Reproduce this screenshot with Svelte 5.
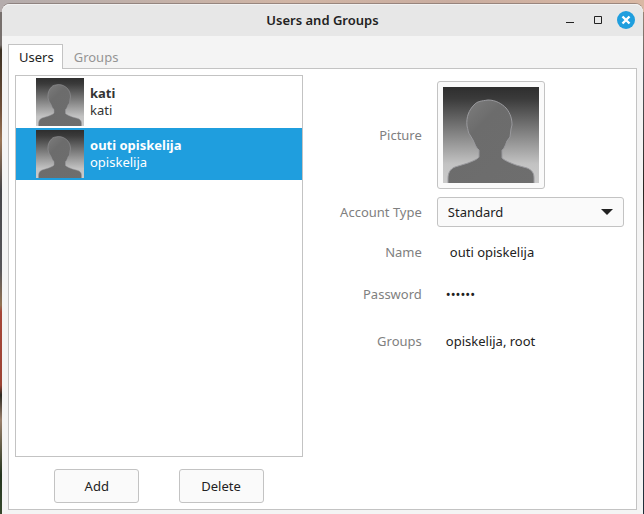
<script>
  let tab = $state('Users');
  let selected = $state(1);
  let accountType = $state('Standard');
  const users = [
    { name: 'kati', login: 'kati', groups: 'kati' },
    { name: 'outi opiskelija', login: 'opiskelija', groups: 'opiskelija, root' }
  ];
  const user = $derived(users[selected]);
</script>

{#snippet avatar(id)}
  <svg class="avatar" viewBox="0 0 96 96" aria-hidden="true">
    <defs>
      <linearGradient id="{id}-sky" x1="0" y1="0" x2="0" y2="1">
        <stop offset="0" stop-color="#2e2e2e" />
        <stop offset=".12" stop-color="#3a3a3a" />
        <stop offset=".5" stop-color="#868686" />
        <stop offset=".8" stop-color="#c2c2c2" />
        <stop offset="1" stop-color="#cbcbcb" />
      </linearGradient>
      <linearGradient id="{id}-head" x1="0" y1="0" x2="1" y2="1">
        <stop offset=".12" stop-color="#7c7c7c" />
        <stop offset=".34" stop-color="#6c6c6c" />
        <stop offset="1" stop-color="#6e6e6e" />
      </linearGradient>
    </defs>
    <rect width="96" height="96" fill="url(#{id}-sky)" />
    <path
      d="M5 97V92C5 86 7 82 12 80L25 76C30 74 35 72 36 70V63C33 61 32 57 30 53L27 48C25 46 25 42 24 39C23 30 26 23 31 18C34 14 39 14 45 13C53 13 59 17 63 21C68 27 69 33 69 38L68 42L67 50L64 54C62 59 61 62 59 63V71C62 74 68 76 73 78L84 81C89 83 91 86 91 91V97Z"
      fill="url(#{id}-head)" stroke="#9a9a9e" stroke-width="1" />
  </svg>
{/snippet}

<div class="desktop">
  <main class="window">
    <header>
      <h1>Users and Groups</h1>
      <div class="controls">
        <button aria-label="Minimize"><svg width="18" height="18" viewBox="0 0 18 18"><path d="M5 11.500h8" stroke="#222" /></svg></button>
        <button aria-label="Maximize"><svg width="18" height="18" viewBox="0 0 18 18"><path d="M5.500 5.500h7v7h-7z" fill="none" stroke="#222" /></svg></button>
        <button aria-label="Close"><svg width="18" height="18" viewBox="0 0 18 18"><circle cx="9" cy="9" r="9" fill="#1f9ede" /><path d="M5.500 5.500l7 7M12.500 5.500l-7 7" stroke="#fff" stroke-width="2.400" /></svg></button>
      </div>
    </header>

    <div class="tabs" role="tablist">
      {#each ['Users', 'Groups'] as t}
        <button role="tab" class="tab" class:active={tab === t} aria-selected={tab === t} onclick={() => (tab = t)}>{t}</button>
      {/each}
    </div>

    <section class="panel">
      <div class="left">
        <div class="list" role="listbox" aria-label="Users">
          {#each users as u, i}
            <button class="user" class:selected={selected === i} role="option" aria-selected={selected === i} onclick={() => (selected = i)}>
              {@render avatar('user' + i)}
              <span class="who"><strong>{u.name}</strong><span>{u.login}</span></span>
            </button>
          {/each}
        </div>
        <div class="actions">
          <button class="push">Add</button>
          <button class="push">Delete</button>
        </div>
      </div>

      <div class="form">
        <label for="picture">Picture</label>
        <button id="picture" class="picture">{@render avatar('large')}</button>

        <label for="type">Account Type</label>
        <div class="combo">
          <select id="type" bind:value={accountType}>
            <option>Standard</option>
            <option>Administrator</option>
          </select>
          <svg width="12" height="6" viewBox="0 0 12 6" aria-hidden="true"><path d="M0 0h12L6 6z" fill="#222" /></svg>
        </div>

        <label for="name">Name</label>
        <button id="name" class="value name">{user.name}</button>

        <label for="password">Password</label>
        <button id="password" class="value">••••••</button>

        <label for="groups">Groups</label>
        <button id="groups" class="value">{user.groups}</button>
      </div>
    </section>
  </main>
</div>

<style>
  :global(body) {
    margin: 0;
  }
  .desktop {
    box-sizing: border-box;
    height: 100vh;
    padding: 4px 1px 0 2px;
    background:
      linear-gradient(90deg, #b4acac, #d0b5a5 45%, #c9ada0 70%, #d9b8a4) top / 100% 12px no-repeat,
      linear-gradient(#77706d 0 45px, #3b3022 50px, #70513b 110px, #9b7657 140px, #46464a 190px, #57565a 270px, #927252 305px, #a64638 312px, #9c4334 385px, #2c2922 395px, #9a806c 420px, #24351e 475px, #36482c) left / 2px 100% no-repeat,
      linear-gradient(#a38a7b, #55565a 80px, #292320 190px, #4b4542 250px, #33434c 360px, #202d38) right / 1px 100% no-repeat,
      #777;
  }
  .window {
    box-sizing: border-box;
    height: 100%;
    display: flex;
    flex-direction: column;
    padding: 0 6px 4px;
    background: #f4f4f4;
    border-radius: 8px 8px 0 0;
    font: 13px/16px 'Noto Sans', sans-serif;
    color: #222;
    box-shadow: 0 -1px #75686499;
  }
  button,
  select {
    font: inherit;
    color: inherit;
    margin: 0;
    padding: 0;
    border: 0;
    background: none;
  }
  header {
    display: grid;
    grid-template-columns: 1fr auto 1fr;
    align-items: center;
    height: 32px;
    margin: 0 -6px;
    padding: 0 8px;
    background: #e7e7e7;
    border-radius: 8px 8px 0 0;
    box-shadow: inset 0 1px #f2f2f2;
  }
  h1 {
    grid-column: 2;
    margin: 0;
    font-size: 13px;
    font-weight: 600;
  }
  .controls {
    display: flex;
    justify-content: flex-end;
    gap: 10px;
  }
  .controls svg {
    display: block;
  }
  .tabs {
    display: flex;
    margin-top: 8px;
    position: relative;
  }
  .tab {
    height: 24px;
    padding: 0 8px 0 10px;
    border: 1px solid transparent;
    border-bottom: 0;
    color: #949494;
  }
  .tab.active {
    background: #fff;
    border-color: #c3c3c3;
    color: #222;
    margin-bottom: -1px;
    height: 25px;
  }
  .panel {
    flex: 1;
    display: flex;
    background: #fff;
    border: 1px solid #c3c3c3;
    padding: 6px;
    min-height: 0;
  }
  .left {
    flex: 0 0 46.8%;
    display: flex;
    flex-direction: column;
  }
  .list {
    flex: 1;
    border: 1px solid #c3c3c3;
  }
  .user {
    display: flex;
    align-items: center;
    gap: 6px;
    width: 100%;
    padding: 2px 20px;
    text-align: left;
    color: #333;
  }
  .user.selected {
    background: #1f9ede;
    color: #fff;
  }
  .user .avatar {
    width: 48px;
    height: 48px;
  }
  .avatar {
    display: block;
  }
  .who {
    display: flex;
    flex-direction: column;
    line-height: 17px;
  }
  .actions {
    display: flex;
    justify-content: space-evenly;
    padding-top: 12px;
  }
  .push {
    width: 85px;
    height: 34px;
    background: #fafafa;
    border: 1px solid #c3c3c3;
    border-radius: 3px;
  }
  .form {
    flex: 1;
    display: grid;
    grid-template-columns: 119px 1fr;
    grid-template-rows: 108px 30px 34px 34px 44px;
    row-gap: 8px;
    column-gap: 15px;
    align-content: start;
    align-items: center;
    padding: 6px 6px 0 0;
  }
  label {
    text-align: right;
    color: #808080;
  }
  .picture {
    width: 108px;
    height: 108px;
    padding: 5px;
    background: #fafafa;
    border: 1px solid #c3c3c3;
    border-radius: 3px;
  }
  .combo {
    display: grid;
    align-items: center;
  }
  .combo > * {
    grid-area: 1 / 1;
  }
  .combo svg {
    justify-self: end;
    margin-right: 11px;
    pointer-events: none;
  }
  select {
    appearance: none;
    width: 100%;
    height: 30px;
    padding: 0 10px;
    background: #fafafa;
    border: 1px solid #c3c3c3;
    border-radius: 3px;
  }
  .value {
    justify-self: start;
    padding-left: 9px;
  }
  .name {
    padding-left: 13px;
  }
</style>
